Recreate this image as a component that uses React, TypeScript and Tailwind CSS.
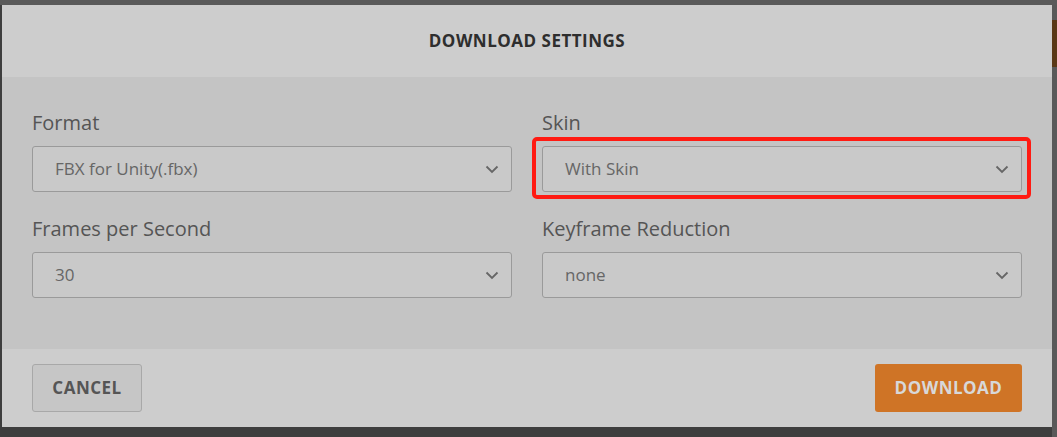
import React from 'react';

const font = { fontFamily: '"Open Sans", "Noto Sans", sans-serif' };

const Chevron: React.FC = () => (
  <svg width="14" height="9" viewBox="0 0 14 9" fill="none" className="shrink-0">
    <path d="M1.5 1.5 L7 7 L12.5 1.5" stroke="#666" strokeWidth="1.8" />
  </svg>
);

const Select: React.FC<{ value: string }> = ({ value }) => (
  <div className="h-[46px] flex items-center justify-between pl-[22px] pr-[12px] bg-[#c9c9c9] border border-[#9a9a9a] rounded-[3px] text-[17px] text-[#666]">
    <span>{value}</span>
    <Chevron />
  </div>
);

const Field: React.FC<{ label: string; value: string; highlight?: boolean }> = ({ label, value, highlight }) => (
  <div className="flex flex-col">
    <label className="text-[20px] leading-[26px] text-[#555] mb-[10px]">{label}</label>
    <div className="relative">
      {highlight && (
        <div className="absolute -top-[9px] -bottom-[7px] -left-[10px] -right-[9px] border-4 border-[#ff1a12] rounded-[5px]"></div>
      )}
      <Select value={value} />
    </div>
  </div>
);

export default function App() {
  return (
    <div className="w-[1057px] h-[437px] bg-[#3e3e3e] relative overflow-hidden" style={font}>
      {/* backdrop bits peeking out */}
      <div className="absolute right-0 top-0 w-[5px] h-full bg-[#595959]">
        <div className="mt-[20px] h-[47px] bg-[#5a3816]"></div>
      </div>
      <div className="absolute left-0 top-0 w-full h-[5px] bg-[#5a5a5a]"></div>

      <div className="absolute left-[2px] top-[5px] w-[1050px] h-[422px] flex flex-col">
        <div className="h-[72px] bg-[#cdcdcd] flex items-center justify-center">
          <h2 className="text-[17px] font-bold tracking-[0.5px] text-[#2e2e2e]">DOWNLOAD SETTINGS</h2>
        </div>

        <div className="h-[272px] bg-[#c4c4c4] px-[30px] pt-[33px]">
          <div className="grid grid-cols-2 gap-x-[30px] gap-y-[24px]">
            <Field label="Format" value="FBX for Unity(.fbx)" />
            <Field label="Skin" value="With Skin" highlight />
            <Field label="Frames per Second" value="30" />
            <Field label="Keyframe Reduction" value="none" />
          </div>
        </div>

        <div className="flex-1 bg-[#cdcdcd] px-[30px] pt-[15px] flex justify-between items-start">
          <button className="w-[110px] h-[48px] border border-[#a8a8a8] bg-[#c6c6c6] rounded-[3px] text-[17px] font-bold tracking-[0.5px] text-[#555]">
            CANCEL
          </button>
          <button className="w-[147px] h-[48px] bg-[#cf7426] rounded-[3px] text-[17px] font-bold tracking-[0.5px] text-[#d8d8d8]">
            DOWNLOAD
          </button>
        </div>
      </div>
    </div>
  );
}
